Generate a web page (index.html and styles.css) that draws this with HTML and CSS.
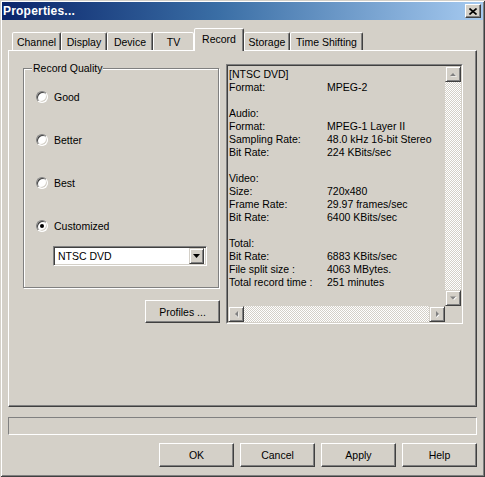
FILE: index.html
```html
<!DOCTYPE html>
<html>
<head>
<meta charset="utf-8">
<title>Properties...</title>
<link rel="stylesheet" href="styles.css">
</head>
<body>
<div class="window">
  <div class="titlebar">
    <span class="title">Properties...</span>
    <div class="close">
      <svg width="8" height="7" viewBox="0 0 8 7"><path d="M0.5 0.5 L7.5 6.5 M7.5 0.5 L0.5 6.5" stroke="#000" stroke-width="1.6" fill="none"/></svg>
    </div>
  </div>
  <div class="content">
    <div class="tabs">
      <div class="tab tab-channel">Channel</div>
      <div class="tab tab-display">Display</div>
      <div class="tab tab-device">Device</div>
      <div class="tab tab-tv">TV</div>
      <div class="tab tab-record selected">Record</div>
      <div class="tab tab-storage">Storage</div>
      <div class="tab tab-shift">Time Shifting</div>
    </div>
    <div class="panel">
      <div class="left-col">
        <div class="group">
          <span class="group-label">Record Quality</span>
          <div class="radios">
            <div class="radio-row"><span class="radio"></span><span>Good</span></div>
            <div class="radio-row"><span class="radio"></span><span>Better</span></div>
            <div class="radio-row"><span class="radio"></span><span>Best</span></div>
            <div class="radio-row"><span class="radio checked"></span><span>Customized</span></div>
          </div>
          <div class="combo">
            <span class="combo-text">NTSC DVD</span>
            <span class="combo-btn"><svg width="7" height="4" viewBox="0 0 7 4"><path d="M0 0 H7 L3.5 4 Z" fill="#000"/></svg></span>
          </div>
        </div>
        <div class="profiles-row"><div class="btn profiles">Profiles ...</div></div>
      </div>
      <div class="infobox">
        <div class="infogrid">
          <div class="info-text">
            <div class="row"><span>[NTSC DVD]</span></div>
            <div class="row"><span class="lbl">Format:</span><span>MPEG-2</span></div>
            <div class="row"></div>
            <div class="row"><span>Audio:</span></div>
            <div class="row"><span class="lbl">Format:</span><span>MPEG-1 Layer II</span></div>
            <div class="row"><span class="lbl">Sampling Rate:</span><span>48.0 kHz 16-bit Stereo</span></div>
            <div class="row"><span class="lbl">Bit Rate:</span><span>224 KBits/sec</span></div>
            <div class="row"></div>
            <div class="row"><span>Video:</span></div>
            <div class="row"><span class="lbl">Size:</span><span>720x480</span></div>
            <div class="row"><span class="lbl">Frame Rate:</span><span>29.97 frames/sec</span></div>
            <div class="row"><span class="lbl">Bit Rate:</span><span>6400 KBits/sec</span></div>
            <div class="row"></div>
            <div class="row"><span>Total:</span></div>
            <div class="row"><span class="lbl">Bit Rate:</span><span>6883 KBits/sec</span></div>
            <div class="row"><span class="lbl">File split size :</span><span>4063 MBytes.</span></div>
            <div class="row"><span class="lbl">Total record time :</span><span>251 minutes</span></div>
          </div>
          <div class="vscroll">
            <div class="sbtn"><svg width="7" height="5" viewBox="0 0 7 5"><path d="M1 4.5 H7 L4 1.5 Z" fill="#fff"/><path d="M0 4 H6 L3 1 Z" fill="#808080"/></svg></div>
            <div class="track"></div>
            <div class="sbtn"><svg width="7" height="5" viewBox="0 0 7 5"><path d="M1 1 H7 L4 4 Z" fill="#fff"/><path d="M0 0.5 H6 L3 3.5 Z" fill="#808080"/></svg></div>
          </div>
          <div class="hscroll">
            <div class="sbtn"><svg width="5" height="7" viewBox="0 0 5 7"><path d="M4.5 1 V7 L1.5 4 Z" fill="#fff"/><path d="M4 0 V6 L1 3 Z" fill="#808080"/></svg></div>
            <div class="track"></div>
            <div class="sbtn"><svg width="5" height="7" viewBox="0 0 5 7"><path d="M1.5 1 V7 L4.5 4 Z" fill="#fff"/><path d="M1 0 V6 L4 3 Z" fill="#808080"/></svg></div>
          </div>
        </div>
      </div>
    </div>
    <div class="status"></div>
    <div class="buttons">
      <div class="btn">OK</div>
      <div class="btn">Cancel</div>
      <div class="btn">Apply</div>
      <div class="btn">Help</div>
    </div>
  </div>
</div>
</body>
</html>
```

FILE: styles.css
```css
html, body {
  margin: 0;
  padding: 0;
  background: #d4d0c8;
}
body {
  font-family: "Liberation Sans", Arial, sans-serif;
  font-size: 10.5px;
  color: #000;
}
.window {
  box-sizing: border-box;
  width: 485px;
  height: 477px;
  padding: 2px;
  background: #d4d0c8;
  box-shadow: inset 1px 1px 0 #d4d0c8, inset -1px -1px 0 #404040, inset 2px 2px 0 #fff, inset -2px -2px 0 #808080;
}
.titlebar {
  height: 18px;
  display: flex;
  align-items: center;
  justify-content: space-between;
  background: linear-gradient(to right, #0a246a 0%, #3a6ea5 45%, #a6caf0 100%);
}
.title {
  color: #fff;
  font-weight: bold;
  font-size: 12px;
  padding-left: 1px;
  letter-spacing: 0.2px;
}
.close {
  box-sizing: border-box;
  width: 16px;
  height: 14px;
  margin-right: 2px;
  background: #d4d0c8;
  border: 1px solid;
  border-color: #fff #404040 #404040 #fff;
  box-shadow: inset -1px -1px 0 #808080;
  display: flex;
  align-items: center;
  justify-content: center;
}
.content {
  padding: 8px 6px 0 6px;
}
.tabs {
  height: 22px;
  display: flex;
  align-items: flex-end;
  padding-left: 4px;
}
.tab {
  box-sizing: border-box;
  height: 18px;
  border: 1px solid;
  border-bottom: none;
  border-color: #fff #404040 transparent #fff;
  border-radius: 2px 2px 0 0;
  box-shadow: inset -1px 0 0 #808080;
  display: flex;
  align-items: center;
  justify-content: center;
  background: #d4d0c8;
  padding-top: 1px;
}
.tab.selected {
  height: 23px;
  margin-bottom: -1px;
  position: relative;
  z-index: 1;
  padding-bottom: 3px;
}
.tab-channel { width: 49px; }
.tab-display { width: 46px; }
.tab-device { width: 46px; }
.tab-tv { width: 41px; border-right-color: #fff; box-shadow: none; }
.tab-record { width: 50px; }
.tab-storage { width: 46px; }
.tab-shift { width: 73px; }
.panel {
  box-sizing: border-box;
  width: 469px;
  height: 357px;
  border: 1px solid;
  border-color: #fff #404040 #404040 #fff;
  box-shadow: inset -1px -1px 0 #808080;
  padding: 13px 0 0 14px;
  display: flex;
  gap: 7px;
}
.left-col {
  width: 196px;
  padding-top: 4px;
}
.group {
  position: relative;
  box-sizing: border-box;
  width: 196px;
  height: 220px;
  border: 1px solid #808080;
  box-shadow: 1px 1px 0 #fff, inset 1px 1px 0 #fff;
  padding: 21px 0 0 12px;
}
.group-label {
  position: absolute;
  top: -7px;
  left: 8px;
  padding: 0 1px;
  background: #d4d0c8;
  line-height: 13px;
}
.radios {
  display: flex;
  flex-direction: column;
  gap: 29px;
}
.radio-row {
  height: 14px;
  display: flex;
  align-items: center;
  gap: 6px;
}
.radio {
  box-sizing: border-box;
  width: 12px;
  height: 12px;
  border-radius: 50%;
  background: #fff;
  border: 1px solid;
  border-color: #808080 #fff #fff #808080;
  box-shadow: inset 1px 1px 0 #404040, inset -1px -1px 0 #d4d0c8;
  display: flex;
  align-items: center;
  justify-content: center;
}
.radio.checked::after {
  content: "";
  width: 4px;
  height: 4px;
  border-radius: 50%;
  background: #000;
}
.combo {
  box-sizing: border-box;
  width: 154px;
  height: 20px;
  margin: 13px 0 0 17px;
  background: #fff;
  border: 1px solid;
  border-color: #808080 #fff #fff #808080;
  box-shadow: inset 1px 1px 0 #404040, inset -1px -1px 0 #d4d0c8;
  display: flex;
  align-items: center;
  justify-content: space-between;
  padding: 2px 2px 2px 4px;
}
.combo-btn {
  box-sizing: border-box;
  width: 15px;
  height: 16px;
  background: #d4d0c8;
  border: 1px solid;
  border-color: #d4d0c8 #404040 #404040 #d4d0c8;
  box-shadow: inset 1px 1px 0 #fff, inset -1px -1px 0 #808080;
  display: flex;
  align-items: center;
  justify-content: center;
}
.profiles-row {
  display: flex;
  justify-content: flex-end;
  margin-top: 12px;
  margin-right: -1px;
}
.btn {
  box-sizing: border-box;
  width: 75px;
  height: 24px;
  border: 1px solid;
  border-color: #fff #404040 #404040 #fff;
  box-shadow: inset -1px -1px 0 #808080;
  display: flex;
  align-items: center;
  justify-content: center;
  background: #d4d0c8;
}
.btn.profiles {
  height: 23px;
}
.infobox {
  box-sizing: border-box;
  width: 237px;
  height: 260px;
  border: 1px solid;
  border-color: #808080 #fff #fff #808080;
}
.infogrid {
  box-sizing: border-box;
  height: 100%;
  border: 1px solid;
  border-color: #404040 #d4d0c8 #d4d0c8 #404040;
  display: grid;
  grid-template-columns: 1fr 16px;
  grid-template-rows: 1fr 16px;
}
.info-text {
  padding: 2px 0 0 1px;
  overflow: hidden;
  line-height: 13px;
  white-space: nowrap;
}
.row {
  height: 13px;
  display: flex;
}
.lbl {
  width: 98px;
  flex: none;
}
.vscroll {
  display: flex;
  flex-direction: column;
}
.hscroll {
  display: flex;
}
.track {
  flex: 1;
  background: repeating-conic-gradient(#fff 0 25%, #d4d0c8 0 50%) 0 0 / 2px 2px;
}
.sbtn {
  box-sizing: border-box;
  width: 16px;
  height: 16px;
  flex: none;
  background: #d4d0c8;
  border: 1px solid;
  border-color: #d4d0c8 #404040 #404040 #d4d0c8;
  box-shadow: inset 1px 1px 0 #fff, inset -1px -1px 0 #808080;
  display: flex;
  align-items: center;
  justify-content: center;
}
.status {
  box-sizing: border-box;
  width: 469px;
  height: 18px;
  margin-top: 10px;
  border: 1px solid;
  border-color: #808080 #fff #fff #808080;
}
.buttons {
  width: 469px;
  margin-top: 8px;
  display: flex;
  justify-content: flex-end;
  gap: 6px;
}
```
